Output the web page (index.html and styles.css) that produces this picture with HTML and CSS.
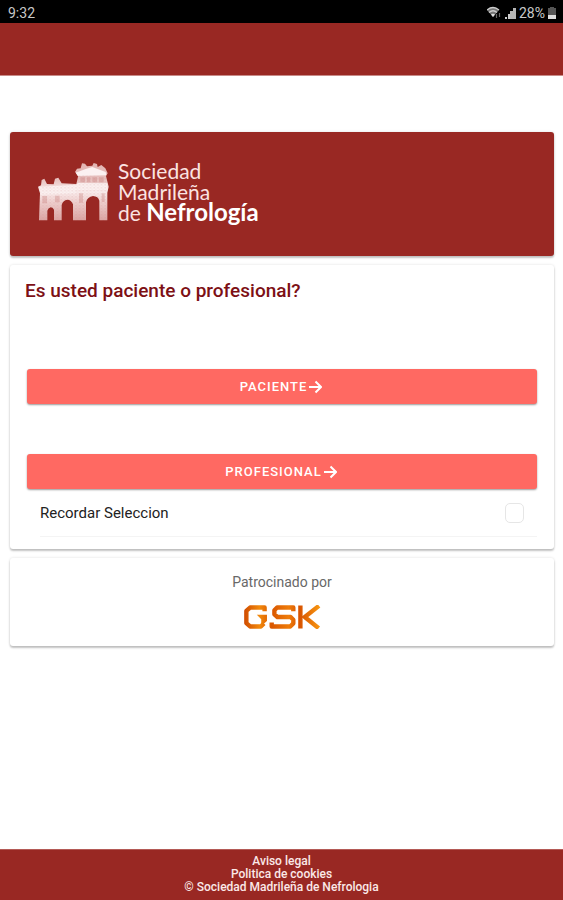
FILE: index.html
```html
<!DOCTYPE html>
<html lang="es">
<head>
<meta charset="utf-8">
<meta name="viewport" content="width=device-width, initial-scale=1">
<title>Sociedad Madrileña de Nefrología</title>
<link rel="stylesheet" href="styles.css">
</head>
<body>
<div class="status">
  <span>9:32</span>
  <div class="status-right">
    <svg class="wifi" viewBox="0 0 15 14" aria-hidden="true">
      <path d="M0 4Q6 -2 12 4L6 11Z" fill="#777"/>
      <path d="M0 4Q6 -1 12 4M2 6.500Q6 3 10 6.500" fill="none" stroke="#ccc" stroke-width="1.300"/>
      <path d="M4 8.500Q6 7 8 8.500L6 11Z" fill="#ddd"/>
      <path d="M9.500 8v4M12.500 7v4" stroke="#666" stroke-width="1.200"/>
    </svg>
    <svg class="signal" viewBox="0 0 11 12" aria-hidden="true">
      <path d="M0 10h2v2H0zM3 7h2v5H3z" fill="#ccc"/>
      <path d="M5 4h3v8H5zM8 1h3v11H8z" fill="#b5b5b5"/>
    </svg>
    <span>28%</span>
    <svg class="battery" viewBox="0 0 8 12" aria-hidden="true">
      <path d="M2 0h4v1h2v8H0V1h2z" fill="#555"/>
      <path d="M0 8h8v4H0z" fill="#ddd"/>
    </svg>
  </div>
</div>
<header class="toolbar"></header>
<main class="content">
  <section class="card brand">
    <svg class="arch" viewBox="27 40 213 176" aria-hidden="true">
      <defs>
        <pattern id="stone" width="11" height="9" patternUnits="userSpaceOnUse">
          <path d="M1 2h3v2H1zM7 6h3v2H7z" fill="#c9827f" opacity=".5"/>
        </pattern>
        <linearGradient id="tone" x1="0" y1="0" x2="0" y2="1">
          <stop offset="0" stop-color="#e2b4b2"/><stop offset=".3" stop-color="#e8c3c1"/>
          <stop offset=".5" stop-color="#faeeee"/><stop offset=".68" stop-color="#efd0cf"/>
          <stop offset="1" stop-color="#dba5a3"/>
        </linearGradient>
      </defs>
      <path fill="url(#tone)" d="M30 213L33 132L27 112L36 108L38 92L46 88L54 104L74 105L78 88L88 85L98 102L142 104L148 78L138 68L144 58L155 57L159 42L168 43L174 51L190 49L194 41L204 44L206 53L217 47L229 57L236 72L231 80L239 112L235 130V213H211V154Q208 141 192 140Q175 142 171 159V213H132V165Q127 151 115 151Q101 153 98 167V213H75V181Q71 174 65 174Q57 176 55 184V213Z"/>
      <path fill="#fbf1f1" d="M32 112L140 106L147 101L235 102V121L140 123V132L35 137ZM140 70L170 59L190 53L230 68L232 78L146 80Z"/>
      <path fill="#c77c79" opacity=".35" d="M154 84h14v15h-14zM174 84h10v15h-10zM190 84h14v15h-14zM210 84h14v15h-14zM40 140h14v22H40zM78 139h14v20H78zM150 132h12v28h-12zM218 132h9v26h-9z"/>
      <path fill="url(#stone)" d="M33 112L142 104L148 78L232 80L235 213H211V154Q208 141 192 140Q175 142 171 159V213H132V165Q127 151 115 151Q101 153 98 167V213H75V181Q71 174 65 174Q57 176 55 184V213H30Z"/>
    </svg>
    <div class="brand-name">
      <span>Sociedad</span>
      <span>Madrileña</span>
      <span>de <b>Nefrología</b></span>
    </div>
  </section>
  <section class="card choice">
    <h1>Es usted paciente o profesional?</h1>
    <button class="action" type="button">PACIENTE<svg viewBox="0 0 14 14" aria-hidden="true"><path d="M1 7h12M7.500 1.500L13 7L7.500 12.500"/></svg></button>
    <button class="action" type="button">PROFESIONAL<svg viewBox="0 0 14 14" aria-hidden="true"><path d="M1 7h12M7.500 1.500L13 7L7.500 12.500"/></svg></button>
    <div class="remember">
      <label for="remember">Recordar Seleccion</label>
      <input id="remember" type="checkbox">
    </div>
  </section>
  <section class="card sponsor">
    <p>Patrocinado por</p>
    <svg class="gsk" viewBox="0 0 228 70" role="img" aria-label="GSK">
      <defs>
        <linearGradient id="flame" gradientUnits="userSpaceOnUse" x1="0" y1="0" x2="228" y2="0">
          <stop offset="0" stop-color="#cf4a00"/><stop offset=".2" stop-color="#f28a0c"/>
          <stop offset=".36" stop-color="#d95600"/><stop offset=".58" stop-color="#ef7d0a"/>
          <stop offset=".72" stop-color="#d75200"/><stop offset="1" stop-color="#fa9b12"/>
        </linearGradient>
      </defs>
      <g fill="none" stroke="url(#flame)" stroke-width="13" stroke-linejoin="round">
        <path d="M61 18V7H18L7 17V53L18 63H50L59 54"/>
        <path d="M146 18V7H98L90 15V27L99 35H138L146 43V54L137 63H82V51"/>
        <path d="M167 1V69M222 2L180 35L221 68"/>
      </g>
      <path fill="url(#flame)" d="M38 28H68V47L51 62V42Z"/>
    </svg>
  </section>
</main>
<footer class="footer">
  <a href="#aviso">Aviso legal</a>
  <a href="#cookies">Politica de cookies</a>
  <span>© Sociedad Madrileña de Nefrologia</span>
</footer>
</body>
</html>
```
FILE: styles.css
```css
* { box-sizing: border-box; }
body {
  margin: 0;
  min-height: 100vh;
  display: flex;
  flex-direction: column;
  background: #fff;
  font-family: Roboto, "Liberation Sans", sans-serif;
}
.status {
  display: flex;
  justify-content: space-between;
  align-items: center;
  height: 23px;
  padding: 2px 7px 0 8px;
  background: #000;
  color: #c8c8c8;
  font-size: 14px;
}
.status-right { display: flex; align-items: center; gap: 3px; }
.wifi { width: 15px; height: 14px; }
.signal { width: 11px; height: 12px; }
.battery { width: 8px; height: 12px; }
.toolbar {
  height: 53px;
  background: #992823;
  border-bottom: 1px solid #c88b88;
}
.content {
  flex: 1;
  display: flex;
  flex-direction: column;
  gap: 9px;
  padding: 56px 9px 20px 10px;
}
.card {
  border-radius: 3px;
  background: #fff;
  box-shadow: 0 2px 2px rgba(0, 0, 0, .22), 0 0 3px rgba(0, 0, 0, .12);
}
.brand {
  display: flex;
  align-items: center;
  gap: 9px;
  padding: 28px 28px 33px;
  background: #992823;
}
.arch { width: 71px; height: 60px; }
.brand-name {
  display: flex;
  flex-direction: column;
  color: #fbe3e1;
  font-family: Lato, sans-serif;
  font-size: 21px;
  line-height: 21px;
}
.brand-name b { font-size: 24px; line-height: 20px; color: #fff; }
.choice { padding: 16px 17px 12px; }
h1 {
  margin: 0 0 68px -2px;
  color: #7d1015;
  font-size: 19px;
  font-weight: 500;
  line-height: 20px;
}
.action {
  display: flex;
  justify-content: center;
  align-items: center;
  gap: 1px;
  width: 100%;
  height: 35px;
  padding: 0 8px 0 6px;
  border: 0;
  border-radius: 3px;
  background: #ff6962;
  box-shadow: 0 1px 2px rgba(0, 0, 0, .4);
  color: #fff;
  font: 500 13px Roboto, sans-serif;
  letter-spacing: 1px;
}
.action + .action { margin-top: 50px; }
.action svg { width: 14px; height: 14px; fill: none; stroke: #fff; stroke-width: 2; }
.remember {
  display: flex;
  justify-content: space-between;
  align-items: center;
  height: 48px;
  margin-left: 13px;
  padding: 0 13px 0 0;
  border-bottom: 1px solid #f4f4f4;
  color: #222;
  font-size: 15px;
}
.remember input {
  appearance: none;
  width: 19px;
  height: 20px;
  margin: 0;
  border: 1px solid #e6e6e6;
  border-radius: 5px;
  background: #fff;
}
.sponsor {
  display: flex;
  flex-direction: column;
  align-items: center;
  padding: 14px 16px 17px;
}
.sponsor p { margin: 0 0 13px; color: #686868; font-size: 14px; line-height: 20px; }
.gsk { width: 77px; height: 24px; }
.footer {
  display: flex;
  flex-direction: column;
  align-items: center;
  padding: 5px 0 6px;
  border-top: 1px solid #b45a56;
  background: #992823;
  color: #fbe9e8;
  font-size: 12px;
  font-weight: 500;
  line-height: 13px;
}
.footer a { color: inherit; text-decoration: none; }
```
